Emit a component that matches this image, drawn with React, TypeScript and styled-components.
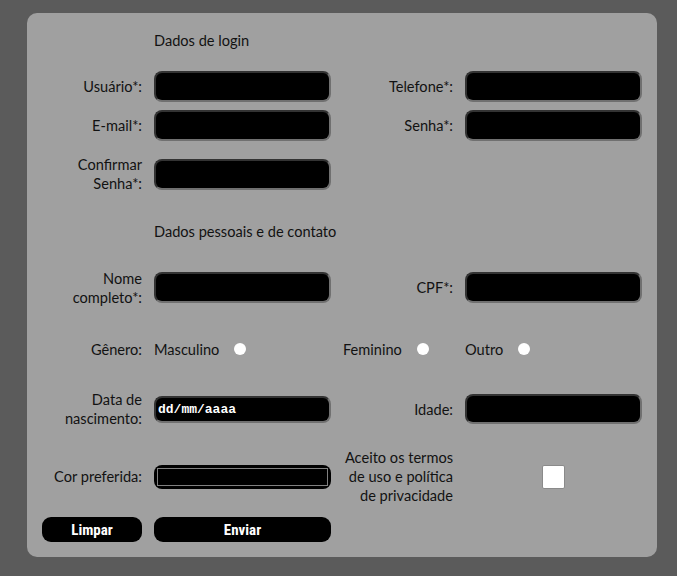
import React from "react";
import styled, { createGlobalStyle } from "styled-components";

const Global = createGlobalStyle`
  html, body { margin: 0; padding: 0; background: #5b5b5b; }
  body { font-family: Lato, "Noto Sans", sans-serif; }
  * { box-sizing: border-box; }
`;

const Page = styled.div`
  width: 677px;
  height: 576px;
  padding: 13px 0 0 27px;
`;

const Panel = styled.form`
  width: 630px;
  height: 544px;
  background: #a0a0a0;
  border-radius: 10px;
  padding: 0 15px 15px 15px;
  display: flex;
  flex-direction: column;
  color: #121212;
  font-size: 14.6px;
  line-height: 19px;
`;

const Row = styled.div<{ $h: number; $mt: number }>`
  display: grid;
  grid-template-columns: 100px 177px 110px 177px;
  column-gap: 12px;
  align-items: center;
  height: ${(p) => p.$h}px;
  margin-top: ${(p) => p.$mt}px;
  flex: none;
`;

const Title = styled.div`
  grid-column: 2 / span 3;
`;

const Label = styled.label`
  text-align: right;
`;

const TextInput = styled.input<{ $h?: number }>`
  width: 177px;
  height: ${(p) => p.$h ?? 31}px;
  background: #000;
  border: 2px solid;
  border-color: #333 #707070 #707070 #333;
  border-radius: 8px;
  outline: none;
  color: #fff;
  padding: 0 3px;
  font: inherit;
`;

const DateInput = styled(TextInput)`
  font-family: "Liberation Mono", "DejaVu Sans Mono", monospace;
  font-size: 13px;
  font-weight: bold;
  color: #fff;
  padding: 0 2px;
`;

const ColorField = styled.div`
  width: 177px;
  height: 24px;
  background: #000;
  border-radius: 8px;
  padding: 3px 3px;
  display: flex;
`;

const Swatch = styled.div`
  flex: 1;
  border: 1px solid #808080;
  background: #000;
`;

const Option = styled.label`
  display: flex;
  align-items: center;
  gap: 15px;
`;

const Radio = styled.input.attrs({ type: "radio" })`
  appearance: none;
  margin: 0;
  width: 12px;
  height: 12px;
  border-radius: 50%;
  background: #fff;
  border: none;
`;

const Check = styled.input.attrs({ type: "checkbox" })`
  appearance: none;
  margin: 0;
  justify-self: center;
  width: 23px;
  height: 24px;
  background: #fff;
  border: 1px solid #8a8a8a;
  border-radius: 2px;
`;

const Button = styled.button<{ $w: number }>`
  width: ${(p) => p.$w}px;
  height: 25px;
  background: #000;
  color: #fff;
  border: none;
  border-radius: 9px;
  font-family: "Liberation Sans Narrow", "Roboto Condensed", "Liberation Sans", Arial, sans-serif;
  font-weight: bold;
  font-size: 15px;
  padding: 0;
`;

export default function App() {
  return (
    <Page>
      <Global />
      <Panel onSubmit={(e) => e.preventDefault()}>
        <Row $h={26} $mt={14}>
          <span />
          <Title>Dados de login</Title>
        </Row>
        <Row $h={31} $mt={18}>
          <Label>Usuário*:</Label>
          <TextInput />
          <Label>Telefone*:</Label>
          <TextInput />
        </Row>
        <Row $h={31} $mt={8}>
          <Label>E-mail*:</Label>
          <TextInput />
          <Label>Senha*:</Label>
          <TextInput type="password" />
        </Row>
        <Row $h={38} $mt={14}>
          <Label>
            Confirmar
            <br />
            Senha*:
          </Label>
          <TextInput type="password" />
        </Row>
        <Row $h={26} $mt={25}>
          <span />
          <Title>Dados pessoais e de contato</Title>
        </Row>
        <Row $h={39} $mt={24}>
          <Label>
            Nome
            <br />
            completo*:
          </Label>
          <TextInput />
          <Label>CPF*:</Label>
          <TextInput />
        </Row>
        <Row $h={24} $mt={30}>
          <Label>Gênero:</Label>
          <Option>
            Masculino <Radio name="genero" />
          </Option>
          <Option>
            Feminino <Radio name="genero" />
          </Option>
          <Option>
            Outro <Radio name="genero" />
          </Option>
        </Row>
        <Row $h={38} $mt={29}>
          <Label>
            Data de
            <br />
            nascimento:
          </Label>
          <DateInput $h={27} defaultValue="dd/mm/aaaa" readOnly />
          <Label>Idade:</Label>
          <TextInput $h={30} />
        </Row>
        <Row $h={57} $mt={20}>
          <Label>Cor preferida:</Label>
          <ColorField>
            <Swatch />
          </ColorField>
          <Label>
            Aceito os termos
            <br />
            de uso e política
            <br />
            de privacidade
          </Label>
          <Check />
        </Row>
        <Row $h={25} $mt={12}>
          <Button type="reset" $w={100}>
            Limpar
          </Button>
          <Button type="submit" $w={177}>
            Enviar
          </Button>
        </Row>
      </Panel>
    </Page>
  );
}
